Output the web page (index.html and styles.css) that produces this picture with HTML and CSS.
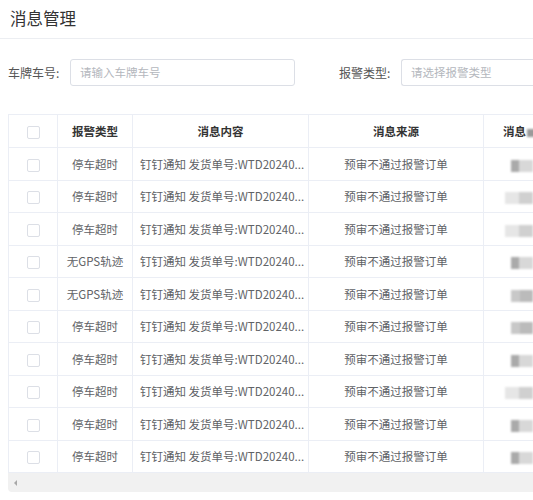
FILE: index.html
```html
<!DOCTYPE html>
<html lang="zh">
<head>
<meta charset="utf-8">
<link rel="stylesheet" href="styles.css">
</head>
<body>
<div class="page">
  <h1 class="title">消息管理</h1>
  <div class="filters">
    <label class="flabel">车牌车号:</label>
    <div class="input w1">请输入车牌车号</div>
    <label class="flabel second">报警类型:</label>
    <div class="input w2">请选择报警类型</div>
  </div>
  <div class="table-wrap">
    <table class="grid">
      <colgroup>
        <col class="c1"><col class="c2"><col class="c3"><col class="c4"><col class="c5">
      </colgroup>
      <thead>
        <tr><th><span class="cb"></span></th><th>报警类型</th><th>消息内容</th><th>消息来源</th><th class="last"><span>消息</span><i class="blk hb"></i></th></tr>
      </thead>
      <tbody>
        <tr><td><span class="cb"></span></td><td>停车超时</td><td class="left">钉钉通知 发货单号:WTD20240...</td><td>预审不通过报警订单</td><td class="last"><i class="blk b1"></i></td></tr>
        <tr><td><span class="cb"></span></td><td>停车超时</td><td class="left">钉钉通知 发货单号:WTD20240...</td><td>预审不通过报警订单</td><td class="last"><i class="blk b2"></i></td></tr>
        <tr><td><span class="cb"></span></td><td>停车超时</td><td class="left">钉钉通知 发货单号:WTD20240...</td><td>预审不通过报警订单</td><td class="last"><i class="blk b2"></i></td></tr>
        <tr><td><span class="cb"></span></td><td>无GPS轨迹</td><td class="left">钉钉通知 发货单号:WTD20240...</td><td>预审不通过报警订单</td><td class="last"><i class="blk b1"></i></td></tr>
        <tr><td><span class="cb"></span></td><td>无GPS轨迹</td><td class="left">钉钉通知 发货单号:WTD20240...</td><td>预审不通过报警订单</td><td class="last"><i class="blk b3"></i></td></tr>
        <tr><td><span class="cb"></span></td><td>停车超时</td><td class="left">钉钉通知 发货单号:WTD20240...</td><td>预审不通过报警订单</td><td class="last"><i class="blk b3"></i></td></tr>
        <tr><td><span class="cb"></span></td><td>停车超时</td><td class="left">钉钉通知 发货单号:WTD20240...</td><td>预审不通过报警订单</td><td class="last"><i class="blk b1"></i></td></tr>
        <tr><td><span class="cb"></span></td><td>停车超时</td><td class="left">钉钉通知 发货单号:WTD20240...</td><td>预审不通过报警订单</td><td class="last"><i class="blk b2"></i></td></tr>
        <tr><td><span class="cb"></span></td><td>停车超时</td><td class="left">钉钉通知 发货单号:WTD20240...</td><td>预审不通过报警订单</td><td class="last"><i class="blk b1"></i></td></tr>
        <tr><td><span class="cb"></span></td><td>停车超时</td><td class="left">钉钉通知 发货单号:WTD20240...</td><td>预审不通过报警订单</td><td class="last"><i class="blk b1"></i></td></tr>
      </tbody>
    </table>
    <div class="hscroll"><span class="arrow"></span></div>
  </div>
</div>
</body>
</html>
```

FILE: styles.css
```css
* { box-sizing: border-box; }
html, body { margin: 0; padding: 0; background: #fff; }
body {
  font-family: "Noto Sans CJK SC", "Microsoft YaHei", sans-serif;
  font-size: 12px;
  color: #606266;
  width: 533px;
  height: 500px;
  overflow: hidden;
}
.title {
  margin: 0;
  padding: 6px 0 0 10px;
  height: 39px;
  font-size: 16.5px;
  font-weight: normal;
  color: #333;
  line-height: 24px;
  border-bottom: 1px solid #eceef2;
}
.filters {
  display: flex;
  align-items: center;
  padding: 13px 0 0 8px;
  height: 41px;
  box-sizing: content-box;
  white-space: nowrap;
}
.flabel { color: #555; font-size: 12px; width: 62px; flex: none; }
.flabel.second { margin-left: 44px; width: 62px; }
.input {
  flex: none;
  height: 27px;
  border: 1px solid #dcdfe6;
  border-radius: 3px;
  color: #b4b7bd;
  font-size: 11.5px;
  line-height: 25px;
  padding-left: 9px;
}
.w1 { width: 225px; }
.w2 { width: 133px; border-right: none; border-radius: 3px 0 0 3px; }
.table-wrap {
  margin: 21px 0 0 8px;
  width: 525px;
}
.grid {
  border-collapse: collapse;
  table-layout: fixed;
  width: 525px;
  border-top: 1px solid #ebeef5;
  border-left: 1px solid #ebeef5;
}
.c1 { width: 49px; }
.c2 { width: 75px; }
.c3 { width: 176px; }
.c4 { width: 175px; }
.c5 { width: 50px; }
.grid th, .grid td {
  border-right: 1px solid #ebeef5;
  border-bottom: 1px solid #ebeef5;
  text-align: center;
  white-space: nowrap;
  overflow: hidden;
  padding: 0;
  font-size: 11.5px;
}
.grid th {
  height: 33px;
  color: #333;
  font-weight: bold;
}
.grid td { height: 32.5px; color: #606266; }
.grid td.left { text-align: left; padding-left: 7px; }
.grid .last { text-align: left; padding-left: 19px; border-right: none; }
.grid th.last span { color: #333; }
.cb {
  display: inline-block;
  width: 13px;
  height: 13px;
  border: 1px solid #dcdfe6;
  border-radius: 2px;
  vertical-align: middle;
  background: #fff;
}
.blk {
  display: inline-block;
  vertical-align: middle;
  height: 12px;
  filter: blur(1.2px);
}
.hb { width: 12px; height: 8px; background: #9a9a9a; margin-left: 1px; }
.b1 { width: 22px; margin-left: 8px; background: linear-gradient(90deg, #aaa 0 35%, #d8d8d8 35% 100%); }
.b2 { width: 28px; margin-left: 2px; background: linear-gradient(90deg, #e6e6e6 0 50%, #d0d0d0 50%); }
.b3 { width: 22px; margin-left: 8px; background: linear-gradient(90deg, #c8c8c8 0 40%, #bbb 40%); }
.hscroll {
  height: 19px;
  width: 525px;
  background: #f1f1f1;
  border-radius: 0 0 0 4px;
  position: relative;
}
.arrow {
  position: absolute;
  left: 6px;
  top: 7px;
  width: 0; height: 0;
  border-top: 3px solid transparent;
  border-bottom: 3px solid transparent;
  border-right: 3px solid #a8a8a8;
}
```
